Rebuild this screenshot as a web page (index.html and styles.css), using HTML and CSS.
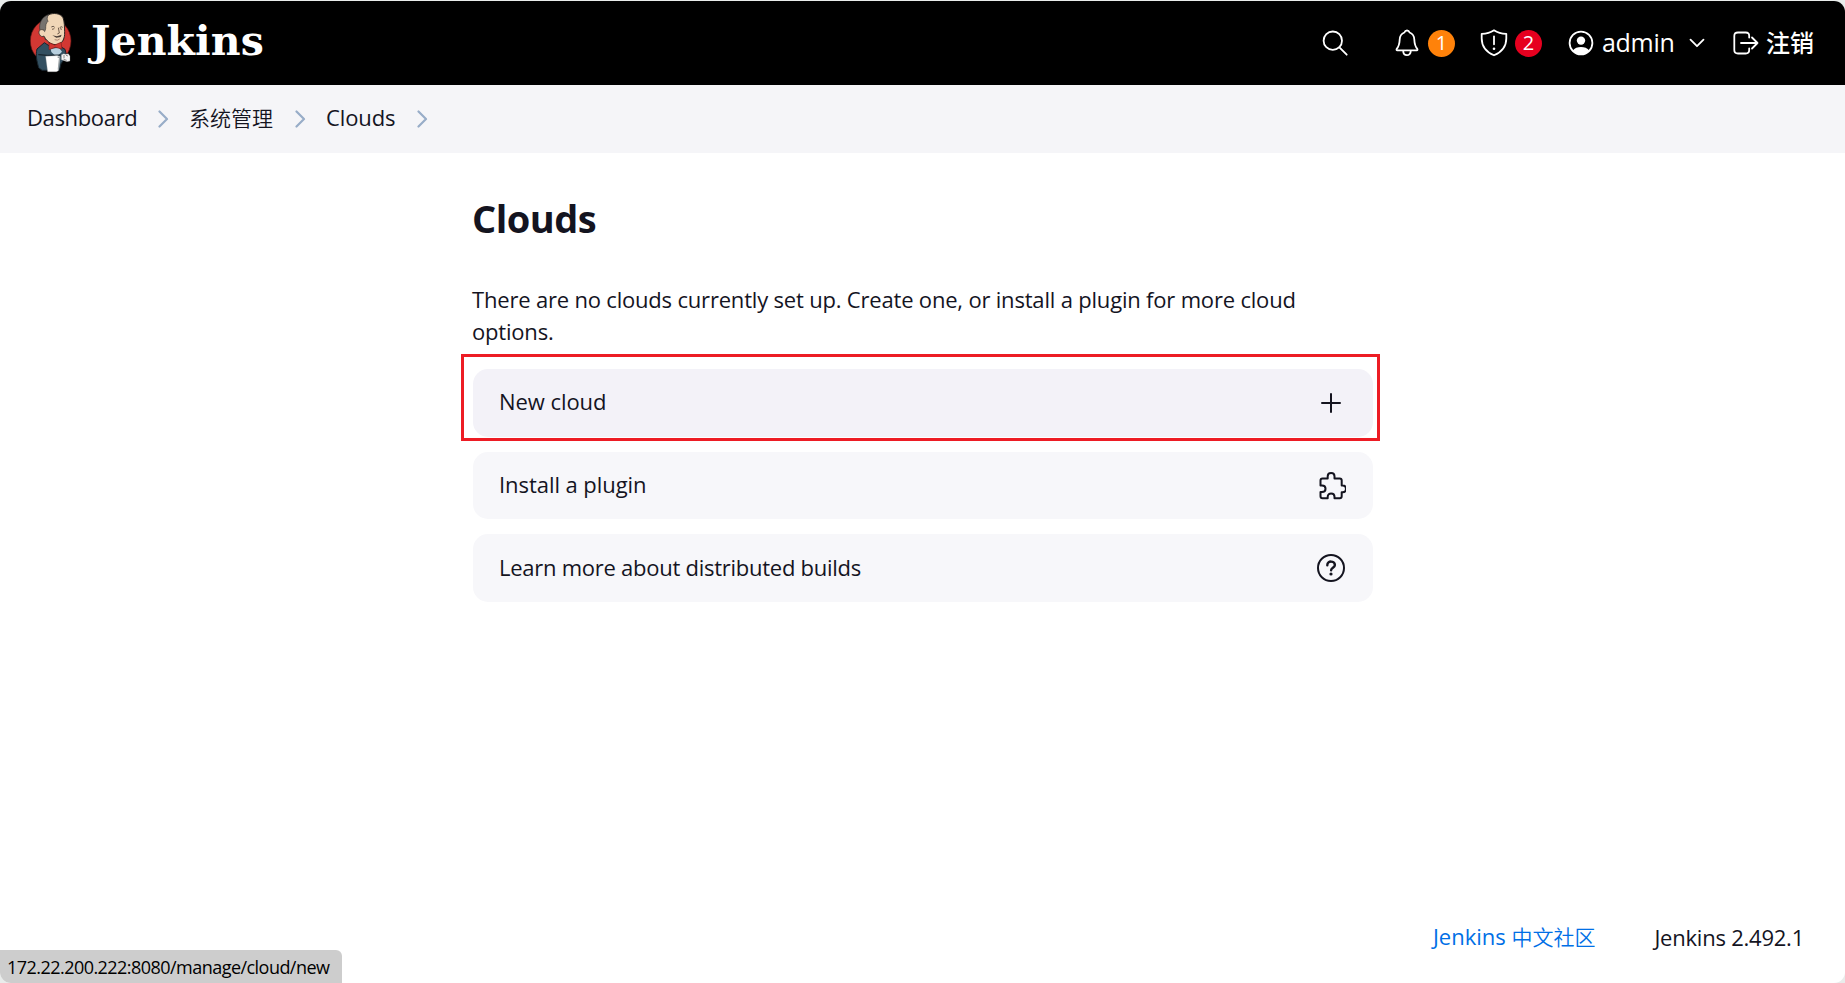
FILE: index.html
```html
<!DOCTYPE html>
<html lang="zh-CN">
<head>
<meta charset="utf-8">
<title>Clouds [Jenkins]</title>
<link rel="stylesheet" href="styles.css">
</head>
<body>
<div class="window">
  <header class="header">
    <a class="brand">
      <svg class="butler" viewBox="0 0 180 225">
        <ellipse cx="92" cy="108" rx="61" ry="66" fill="#d33833" stroke="#5b1512" stroke-width="2"/>
        <path d="M70 90C56 70 60 40 84 30c16-8 38-5 45 8 5 12 4 28 5 42 1 22-8 39-26 39-16 0-28-10-38-29z" fill="#f0d6b7" stroke="#2a2523" stroke-width="3"/>
        <path d="M60 76c-5-20 6-42 26-47-6 8-5 14-2 20-7 5-7 14-7 22l-3 9z" fill="#77736f" stroke="#3a3633" stroke-width="2"/>
        <path d="M72 76c-12-7-19 4-13 13 3 6 9 7 13 4l5 12" fill="#f0d6b7" stroke="#3a302a" stroke-width="2.500"/>
        <path d="M51 132l22-19 20 13 26-3 16 10 5 19-17 24-5 20H66l-10-8c-5-20-10-37-5-56z" fill="#335061" stroke="#17242d" stroke-width="3"/>
        <path d="M92 131l25-3 9 12-16 16-16-15z" fill="#b8d0df"/>
        <path d="M87 113l17 7 19-8 3 20-20-5-19 7z" fill="#d33833" stroke="#831c19" stroke-width="2"/>
        <path d="M55 149l27 2 40-1" fill="none" stroke="#111b22" stroke-width="3"/>
        <path d="M77 154l34-2 8 2-4 43-6 3H83z" fill="#fff" stroke="#aaa" stroke-width="1"/>
        <path d="M113 156l6 2-4 36" fill="none" stroke="#9ca3a6" stroke-width="4"/>
        <path d="M124 149l7-3 6 2 8-2 5 7v15l-9 2-17-6z" fill="#f4f4f4" stroke="#777" stroke-width="1"/>
        <path d="M132 150v10m6-9l6 2m-13 10l9 3" fill="none" stroke="#555" stroke-width="2"/>
        <path d="M94 66q6-5 10 1m15 1q5-5 9-1" fill="none" stroke="#493c34" stroke-width="2.500"/>
        <path d="M96 73l7-2m17 0l6 2M115 68l3 16-6 3" fill="none" stroke="#594638" stroke-width="2.500"/>
        <path d="M97 91l14 3 14-5-3 7-13 2z" fill="#493d37"/>
        <path d="M104 104q9 4 15-2" fill="none" stroke="#8b5d51" stroke-width="2"/>
      </svg>
      <span class="wordmark">Jenkins</span>
    </a>
    <nav class="tools">
      <svg class="ico search" viewBox="0 0 26 26"><circle cx="10.800" cy="10.700" r="9.200"/><path d="M17.400 17.300L24.700 24.700"/></svg>
      <svg class="ico bell" viewBox="0 0 24 28"><path d="M12 1.500c-1.500 0-2.200.9-2.600 2C6.100 4.800 4.800 7.500 4.700 10.500c-.2 4.500-.8 7-3 9.300-.4.8-.2 1.500.6 1.500h19.400c.8 0 1-.7.6-1.500-2.200-2.300-2.800-4.800-3-9.300-.1-3-1.400-5.700-4.700-7-.4-1.100-1.100-2-2.600-2zM8.200 21.700c0 6 7.600 6 7.600 0"/></svg>
      <span class="badge badge-orange">1</span>
      <svg class="ico shield" viewBox="0 0 28 28"><path d="M14 1.300C10.500 3.700 6.300 4.800 1.700 4.800v4.600c0 7.500 5 13.700 12.300 16.900 7.300-3.200 12.300-9.400 12.300-16.900V4.800C21.700 4.800 17.500 3.700 14 1.300zM14 7.300v8"/><circle class="solid" cx="14" cy="19.700" r="1.300"/></svg>
      <span class="badge badge-red">2</span>
      <svg class="ico user" viewBox="0 0 26 26"><circle cx="13" cy="13" r="11.400"/><circle class="solid" cx="13" cy="10.600" r="4.200"/><path class="solid" d="M4.700 20.500C8.300 15.900 17.700 15.900 21.300 20.500 17 25.500 9 25.500 4.700 20.500z"/></svg>
      <span class="username">admin</span>
      <svg class="ico caret" viewBox="0 0 16 10"><path d="M1.500 1.700L8 8.200l6.500-6.500"/></svg>
      <svg class="ico exit" viewBox="0 0 26 24"><path d="M16.200 6.500V5c0-2.500-1-3.500-3.500-3.500H5C2.500 1.500 1.300 2.700 1.300 5v14c0 2.300 1.200 3.500 3.700 3.500h7.700c2.500 0 3.500-1 3.500-3.500v-1.500M8 12h16.500M19 6.500l5.500 5.500-5.500 5.500"/></svg>
      <span class="logout">注销</span>
    </nav>
  </header>
  <nav class="crumbs">
    <span class="crumb c1">Dashboard</span>
    <svg class="sep" viewBox="0 0 11 18"><path d="M1.500 1.500L9 9l-7.500 7.500"/></svg>
    <span class="crumb c2">系统管理</span>
    <svg class="sep" viewBox="0 0 11 18"><path d="M1.500 1.500L9 9l-7.500 7.500"/></svg>
    <span class="crumb c3">Clouds</span>
    <svg class="sep" viewBox="0 0 11 18"><path d="M1.500 1.500L9 9l-7.500 7.500"/></svg>
  </nav>
  <main class="main">
    <h1 class="title">Clouds</h1>
    <p class="intro">There are no clouds currently set up. Create one, or install a plugin for more cloud options.</p>
    <div class="highlight">
      <a class="card card-hover"><span class="label short">New cloud</span>
        <svg class="cico" viewBox="0 0 30 30"><path d="M15 6v18M6 15h18"/></svg></a>
    </div>
    <a class="card"><span class="label short">Install a plugin</span>
      <svg class="cico" viewBox="0 0 30 30"><path d="M6.500 7.500h5.200V5.300c0-4.400 6.800-4.400 6.800 0v2.200h5.200c1.300 0 2 .7 2 2v5h1c4.400 0 4.400 6.800 0 6.800h-1v4c0 1.300-.7 2-2 2h-5.200v-1.500c0-4.400-6.800-4.400-6.800 0v1.500H6.500c-1.300 0-2-.7-2-2v-4.200H6c4.700 0 4.700-6.700 0-6.700H4.500V9.500c0-1.300.7-2 2-2z"/></svg></a>
    <a class="card card-last"><span class="label">Learn more about distributed builds</span>
      <svg class="cico" viewBox="0 0 30 30"><circle cx="15" cy="15" r="13"/><path class="bold" d="M11.300 12.200c0-5 7.600-4.600 7.600-.2 0 2.700-3.800 2.900-3.800 5.300"/><circle class="dot" cx="15" cy="21" r="1.600"/></svg></a>
  </main>
  <footer class="footer">
    <a class="community">Jenkins <span class="han">中文社区</span></a>
    <span class="version">Jenkins 2.492.1</span>
  </footer>
  <div class="status"><span class="url">172.22.200.222:8080/manage/cloud/new</span></div>
</div>
</body>
</html>
```
FILE: styles.css
```css
* { box-sizing: border-box; }
body {
  margin: 0;
  padding-top: 1px;
  height: 983px;
  overflow: hidden;
  background: #e9eceb;
  color: #14141f;
  font-family: "Open Sans", "Noto Sans CJK SC", sans-serif;
  font-size: 22px;
}
.window {
  position: relative;
  display: flex;
  flex-direction: column;
  height: 982px;
  overflow: hidden;
  background: #fff;
  border-radius: 11px;
}
svg { display: block; flex: none; fill: none; }
span, a { white-space: nowrap; }
.header {
  display: flex;
  justify-content: space-between;
  height: 84px;
  flex: none;
  background: #000;
  color: #fff;
}
.brand { display: flex; padding: 4px 0 0 20px; }
.butler { width: 60px; height: 75px; }
.wordmark {
  margin-left: 11px;
  font: bold 41px/73px "DejaVu Serif", serif;
  letter-spacing: 0.1px;
}
.tools { display: flex; align-items: center; height: 84px; padding: 0 31px 0 0; }
.ico { stroke: #fff; stroke-width: 1.8; stroke-linecap: round; stroke-linejoin: round; }
.solid { fill: #fff; stroke: none; }
.search { width: 26px; height: 26px; margin-right: 47px; }
.bell { width: 24px; height: 28px; margin-right: 9px; }
.badge {
  width: 27px;
  height: 27px;
  border-radius: 50%;
  font-size: 20px;
  line-height: 26px;
  text-align: center;
}
.badge-orange { background: #ff820a; }
.badge-red { background: #e6001f; }
.shield { width: 28px; height: 28px; margin: 0 7px 0 25px; }
.user { width: 26px; height: 26px; margin: 0 8px 0 26px; }
.username { width: 72px; font-size: 25px; line-height: 32px; padding-bottom: 2px; letter-spacing: -0.3px; }
.caret { width: 16px; height: 10px; margin: 0 28px 0 15px; }
.exit { width: 26px; height: 24px; margin-right: 7px; }
.logout { width: 48px; font-size: 24px; line-height: 34px; font-weight: 500; }
.crumbs {
  display: flex;
  align-items: center;
  height: 68px;
  flex: none;
  padding-left: 27px;
  background: #f5f5f8;
}
.crumb { padding-bottom: 5px; }
.sep { width: 11px; height: 18px; stroke: #98adc8; stroke-width: 2.2; stroke-linecap: round; stroke-linejoin: round; }
.c1 { width: 131px; letter-spacing: -0.35px; }
.c2 { width: 106px; margin-left: 20px; font-size: 21px; font-weight: 350; }
.c3 { width: 91px; margin-left: 20px; letter-spacing: -0.1px; }
.main { width: 900px; margin-left: 473px; flex: 1; }
.title { margin: 39px 0 0 -1px; font-size: 38px; line-height: 52px; font-weight: 700; letter-spacing: -0.5px; }
.intro { margin: 39px 0 0 -1px; line-height: 32px; letter-spacing: -0.19px; }
.highlight {
  width: 919px;
  height: 87px;
  margin: 7px 0 11px -12px;
  padding: 12px 4px 0 9px;
  border: 3px solid #ed1c24;
}
.card {
  display: flex;
  justify-content: space-between;
  align-items: center;
  height: 67px;
  margin-bottom: 15px;
  padding: 0 27px 0 26px;
  border-radius: 15px;
  background: #f7f7fa;
}
.label { padding-bottom: 3px; letter-spacing: -0.26px; }
.short { letter-spacing: -0.06px; }
.card-hover { height: 68px; background: #f3f2f8; }
.card-hover .label { padding-bottom: 4px; }
.card-last { height: 68px; }
.cico { width: 30px; height: 30px; stroke: #14141f; stroke-width: 2; stroke-linecap: round; stroke-linejoin: round; }
.bold { stroke-width: 2.400; }
.dot { fill: #14141f; stroke: none; }
.footer { display: flex; justify-content: flex-end; gap: 59px; height: 61px; padding-right: 41px; line-height: 30px; }
.community { color: #006fe6; margin-top: -1px; }
.version { letter-spacing: -0.23px; }
.han { font-size: 21px; font-weight: 350; }
.status {
  position: absolute;
  left: 0;
  bottom: 0;
  width: 342px;
  height: 33px;
  padding-left: 7px;
  border-top-right-radius: 6px;
  background: #cdcdcd;
  color: #000;
  font-size: 18px;
  line-height: 34px;
  letter-spacing: -0.54px;
}
```
